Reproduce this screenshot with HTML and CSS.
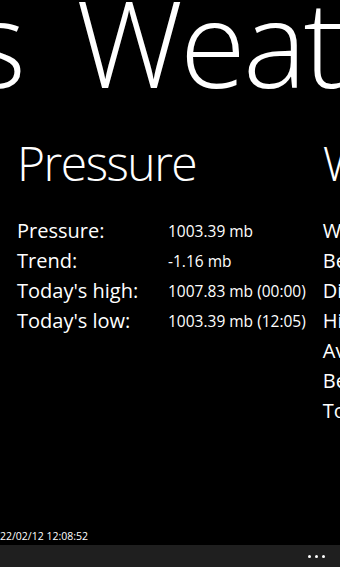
FILE: index.html
```html
<!DOCTYPE html>
<html>
	<head>
		<title>Weather</title>
		<link rel="stylesheet" href="styles.css">
	</head>
	<body>
		<div class='screen'>
			<div class='title'>s Weather</div>
			<div class='panels'>
				<div class='panel'>
					<div class='header'>Pressure</div>
					<div class='rows'>
						<div class='label'>Pressure:</div><div class='value'>1003.39 mb</div>
						<div class='label'>Trend:</div><div class='value'>-1.16 mb</div>
						<div class='label'>Today's high:</div><div class='value'>1007.83 mb (00:00)</div>
						<div class='label'>Today's low:</div><div class='value'>1003.39 mb (12:05)</div>
					</div>
				</div>
				<div class='panel'>
					<div class='header'>Wind</div>
					<div class='rows'>
						<div class='label'>Wind speed:</div><div class='value'>12 mph</div>
						<div class='label'>Bearing:</div><div class='value'>240</div>
						<div class='label'>Direction:</div><div class='value'>WSW</div>
						<div class='label'>High gust:</div><div class='value'>18 mph</div>
						<div class='label'>Average:</div><div class='value'>10 mph</div>
						<div class='label'>Beaufort:</div><div class='value'>3</div>
						<div class='label'>Today's high:</div><div class='value'>24 mph</div>
					</div>
				</div>
			</div>
			<div class='updated'>22/02/12 12:08:52</div>
			<div class='appbar'>
				<div class='more'><span></span><span></span><span></span></div>
			</div>
		</div>
	</body>
</html>
```

FILE: styles.css
```css
body{
	margin:0;
	background-color:#000;
	color:#fff;
	font-family:"Open Sans", "Noto Sans", sans-serif;
}
.screen{
	width:340px;
	height:567px;
	overflow:hidden;
	display:flex;
	flex-direction:column;
}
.title{
	font-size:120px;
	font-weight:300;
	letter-spacing:-3px;
	word-spacing:25px;
	line-height:83px;
	height:83px;
	white-space:nowrap;
	margin-left:-30px;
}
.panels{
	flex:1;
	display:flex;
	overflow:hidden;
}
.panel{
	flex:0 0 300px;
	box-sizing:border-box;
	padding-left:17px;
	padding-top:50px;
}
.header{
	font-size:48px;
	font-weight:300;
	letter-spacing:-1.5px;
	line-height:60px;
	white-space:nowrap;
}
.rows{
	margin-top:23px;
	display:grid;
	grid-template-columns:151px auto;
	grid-auto-rows:30px;
	white-space:nowrap;
}
.label{
	font-size:20px;
	line-height:30px;
}
.value{
	font-size:15.5px;
	line-height:30px;
}
.updated{
	font-size:10.5px;
	line-height:14px;
	height:14px;
	margin-bottom:2px;
}
.appbar{
	height:22px;
	background-color:#1f1f1f;
	display:flex;
	justify-content:flex-end;
	padding-right:15px;
}
.more{
	display:flex;
	gap:4px;
	padding-top:10px;
}
.more span{
	width:3px;
	height:3px;
	border-radius:50%;
	background-color:#fff;
}
```
